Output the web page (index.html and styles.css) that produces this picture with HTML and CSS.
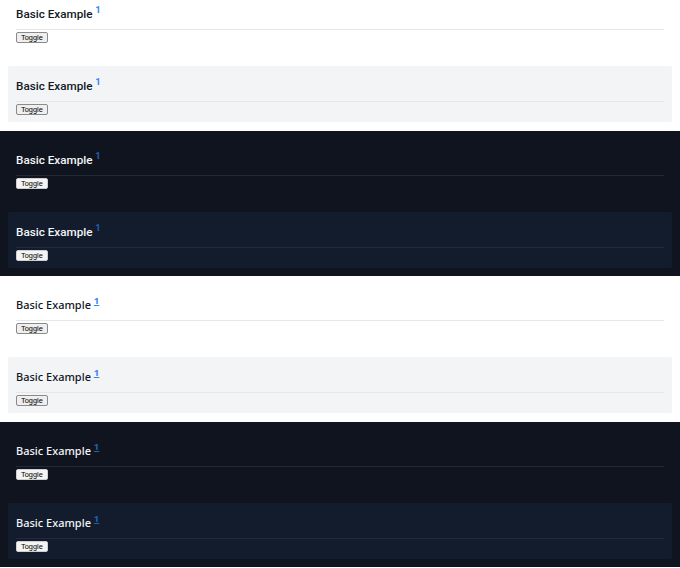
FILE: index.html
```html
<!DOCTYPE html>
<html lang="en">
<head>
<meta charset="utf-8">
<title>Basic Example</title>
<link rel="stylesheet" href="styles.css">
</head>
<body>
<div class="group light first sans-a">
  <section class="plain">
    <div class="header"><h3 class="title">Basic Example <sup><a href="#" class="ref">1</a></sup></h3></div>
    <button class="toggle">Toggle</button>
  </section>
  <section class="card">
    <div class="header"><h3 class="title">Basic Example <sup><a href="#" class="ref">1</a></sup></h3></div>
    <button class="toggle">Toggle</button>
  </section>
</div>
<div class="group dark sans-a">
  <section class="plain">
    <div class="header"><h3 class="title">Basic Example <sup><a href="#" class="ref">1</a></sup></h3></div>
    <button class="toggle">Toggle</button>
  </section>
  <section class="card">
    <div class="header"><h3 class="title">Basic Example <sup><a href="#" class="ref">1</a></sup></h3></div>
    <button class="toggle">Toggle</button>
  </section>
</div>
<div class="group light sans-b">
  <section class="plain">
    <div class="header"><h3 class="title">Basic Example <sup><a href="#" class="ref">1</a></sup></h3></div>
    <button class="toggle">Toggle</button>
  </section>
  <section class="card">
    <div class="header"><h3 class="title">Basic Example <sup><a href="#" class="ref">1</a></sup></h3></div>
    <button class="toggle">Toggle</button>
  </section>
</div>
<div class="group dark sans-b">
  <section class="plain">
    <div class="header"><h3 class="title">Basic Example <sup><a href="#" class="ref">1</a></sup></h3></div>
    <button class="toggle">Toggle</button>
  </section>
  <section class="card">
    <div class="header"><h3 class="title">Basic Example <sup><a href="#" class="ref">1</a></sup></h3></div>
    <button class="toggle">Toggle</button>
  </section>
</div>
</body>
</html>
```

FILE: styles.css
```css
html, body {
  margin: 0;
  padding: 0;
  background: #ffffff;
}

.group {
  display: flex;
  flex-direction: column;
  gap: 16px;
  padding: 8px 8px 8.5px;
}

.group.first {
  padding-top: 0;
}

.group.first .plain {
  padding-top: 0;
}

.plain {
  padding: 7px 8px;
  display: flex;
  flex-direction: column;
  align-items: flex-start;
}

.card {
  padding: 6px 8px 7px;
  display: flex;
  flex-direction: column;
  align-items: flex-start;
  border-radius: 2px;
}

.header {
  align-self: stretch;
  padding: 6px 0 7px;
  border-bottom: 1px solid #e5e7eb;
}

.title {
  margin: 0;
  font-size: 11.7px;
  line-height: 16px;
  font-weight: 500;
}

.title sup {
  font-size: 9.5px;
  line-height: 0;
  vertical-align: 5px;
  font-weight: 700;
}

.ref {
  color: #3b82f6;
  text-decoration: none;
}

.toggle {
  margin-top: 2px;
  font-family: "Liberation Sans", Arial, sans-serif;
  font-size: 7.4px;
  line-height: 9px;
  padding: 0 4px;
  border: 1px solid #8a8a8a;
  border-radius: 2px;
  background: #efefef;
  color: #000;
}

.sans-a .title {
  font-family: Roboto, "Liberation Sans", sans-serif;
}

.sans-b .title {
  font-family: "Noto Sans", "Liberation Sans", sans-serif;
  font-size: 11px;
}

.sans-b .ref {
  text-decoration: underline;
}

.light {
  background: #ffffff;
}

.light .title {
  color: #111827;
}

.light .card {
  background: #f3f4f6;
}

.dark {
  background: #10141f;
}

.dark .title {
  color: #f3f4f6;
}

.dark .header {
  border-bottom-color: #232a37;
}

.dark .card {
  background: #121c2d;
}

.dark .ref {
  color: #1e63ad;
}

.dark .toggle {
  background: #f4f4f4;
  border-color: #cfcfcf;
}
```
